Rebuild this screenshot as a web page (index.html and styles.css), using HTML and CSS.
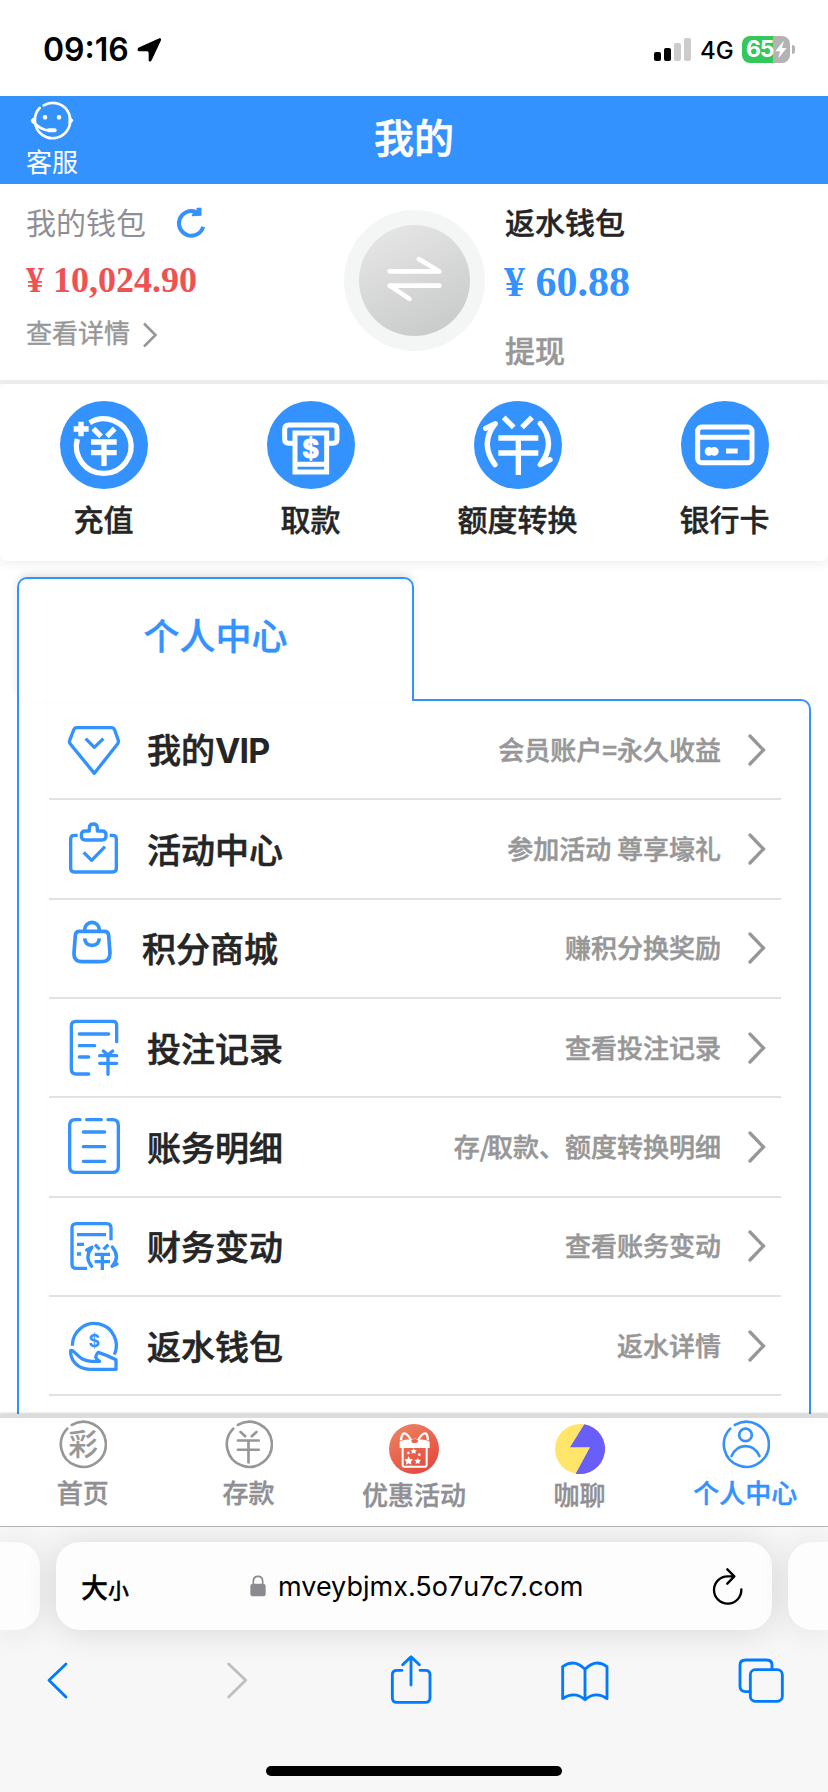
FILE: index.html
```html
<!DOCTYPE html>
<html lang="zh-CN">
<head>
<meta charset="utf-8">
<title>我的</title>
<link rel="stylesheet" href="styles.css">
</head>
<body>
<div class="screen">
  <div class="status">
    <span class="time">09:16</span>
    <svg class="loc" viewBox="408 111 78 78"><path d="M415 143L478 115q7-2 5 6L455 181q-4 7-9 1V159q0-5-5-5H418q-9-2-3-11Z"/></svg>
    <svg class="signal" viewBox="0 0 111 69"><rect y="42" width="21" height="27" rx="6"/><rect x="30" y="30" width="21" height="39" rx="6"/><rect x="60" y="15" width="21" height="54" rx="6" fill="#ccc"/><rect x="90" width="21" height="69" rx="6" fill="#ccc"/></svg>
    <span class="net">4G</span>
    <div class="battery"><span>65</span><svg viewBox="0 0 36 54"><path d="M25 1L1 31H15L10 52 35 21H21L26 2Z" fill="#fff"/></svg></div>
    <i class="battery-cap"></i>
  </div>

  <header class="header">
    <a class="service">
      <svg viewBox="88 303 138 120" fill="none" stroke="#fff" stroke-width="8" stroke-linecap="round"><path d="M132 316A53 53 0 1 1 106 366Q104 340 120 324M106 370Q125 391 150 391"/><path d="M106 352q-24 9 0 22ZM208 352q24 9 0 20Z" fill="#fff" stroke-width="2"/><path d="M148 391H165" stroke-width="12"/><path d="M136 352h0M178 352h0" stroke-width="14"/></svg>
      <span>客服</span>
    </a>
    <h1>我的</h1>
  </header>

  <section class="wallets">
    <div class="wallet mine">
      <div class="wallet-name">我的钱包
        <svg viewBox="525 82 92 96" fill="none" stroke="#3492ff" stroke-width="12"><path d="M588 97A37 37 0 1 0 609 141"/><path d="M590 84h14v24l-29 2q-2-9 12-13z" fill="#3492ff" stroke="none"/></svg>
      </div>
      <div class="money red">¥ 10,024.90</div>
      <div class="detail">查看详情 <svg viewBox="0 0 16 26" fill="none" stroke="#979797" stroke-width="2.6"><path d="M2 1.5L13.500 13 2 24.500"/></svg></div>
    </div>
    <div class="swap"><div><svg viewBox="165 222 178 144" fill="none" stroke="#fff" stroke-width="14" stroke-linecap="round" stroke-linejoin="round"><path d="M179 271H329L267 234M329 314H179L239 354"/></svg></div></div>
    <div class="wallet rebate">
      <div class="wallet-name">返水钱包</div>
      <div class="money blue">¥ 60.88</div>
      <div class="withdraw">提现</div>
    </div>
  </section>

  <nav class="actions">
    <a><svg viewBox="178 63 264 264" fill="none" stroke="#fff" stroke-width="16"><circle cx="310" cy="195" r="132" fill="#3492ff" stroke="none"/><path d="M267 128A82 82 0 1 1 230 177M219 147H264M241 125V169M278 146L301 169M342 146L319 169M271 186H348M271 218H348M310 181V258"/></svg><span>充值</span></a>
    <a><svg viewBox="799 63 264 264" fill="none" stroke="#fff" stroke-width="15"><circle cx="931" cy="195" r="132" fill="#3492ff" stroke="none"/><path d="M883 190H864Q852 190 852 178V148Q852 135 864 135H997Q1009 135 1009 148V178Q1009 190 997 190H977"/><path d="M883 159H978V276H883ZM876 253H985"/><text x="930" y="235" text-anchor="middle" font-family="Inter" font-size="77" font-weight="700" fill="#fff" stroke="#fff" stroke-width="3">$</text></svg><span>取款</span></a>
    <a><svg viewBox="178 63 264 264" fill="none" stroke="#fff" stroke-width="16"><circle cx="310" cy="195" r="132" fill="#3492ff" stroke="none"/><path d="M267 112L297 142M352 112L322 142M251 174H371M251 219H371M311 174V285"/><path d="M213 145L242 131Q194 190 241 254M377 131Q426 190 377 254L406 239" stroke-linecap="round" stroke-linejoin="round"/></svg><span>额度转换</span></a>
    <a><svg viewBox="799 63 264 264" fill="none" stroke="#fff" stroke-width="15"><circle cx="931" cy="195" r="132" fill="#3492ff" stroke="none"/><rect x="849" y="141" width="163" height="107" rx="12"/><path d="M849 172H1012M934 213H969"/><path d="M883 214h0M899 214h0" stroke-width="26" stroke-linecap="round"/></svg><span>银行卡</span></a>
  </nav>

  <main class="center">
    <div class="tab">个人中心</div>
    <ul class="list">
      <li><svg class="ico" viewBox="192 480 180 180"><path d="M230 503H334Q341 503 344 510L355 541Q356 547 353 551L283 640 211 552Q207 547 209 541L221 510Q224 503 230 503ZM257 536L283 562 310 536"/></svg><b>我的<span>VIP</span></b><em>会员账户=永久收益</em><svg class="go" viewBox="0 0 18 32"><path d="M2 2L15.500 16 2 30"/></svg></li>
      <li><svg class="ico" viewBox="192 778 180 180"><path d="M233 827H223Q212 827 212 838V926Q212 937 223 937H338Q349 937 349 926V838Q349 827 338 827H329M256 814H268V805Q268 793 280 793T292 805V814H306Q318 814 318 826V829Q318 841 306 841H256Q244 841 244 829V826Q244 814 256 814ZM251 878L275 902 315 861"/></svg><b>活动中心</b><em>参加活动 尊享壕礼</em><svg class="go" viewBox="0 0 18 32"><path d="M2 2L15.500 16 2 30"/></svg></li>
      <li class="shop"><svg class="ico" viewBox="192 1077 180 180"><path d="M254 1116V1112A22 22 0 0 1 298 1112V1116M238 1117H313Q325 1117 326 1129L330 1182Q330 1208 306 1208H246Q221 1208 222 1182L226 1129Q227 1117 238 1117ZM254 1138Q256 1159 276 1159T298 1138" stroke-width="11"/></svg><b>积分商城</b><em>赚积分换奖励</em><svg class="go" viewBox="0 0 18 32"><path d="M2 2L15.500 16 2 30"/></svg></li>
      <li><svg class="ico" viewBox="192 85 180 180"><path stroke-linecap="round" d="M350 156V107Q350 95 339 95H228Q214 95 214 109V239Q214 253 228 253H266M238 133H326M238 168H284M238 202H266M310 184L324 196 338 184M299 198H350M299 221H350M324 198V254"/></svg><b>投注记录</b><em>查看投注记录</em><svg class="go" viewBox="0 0 18 32"><path d="M2 2L15.500 16 2 30"/></svg></li>
      <li><svg class="ico" viewBox="192 384 180 180"><path stroke-linecap="round" d="M240 392H226Q209 392 209 409V533Q209 550 226 550H337Q355 550 355 533V409Q355 392 337 392H324M260 392H304M250 429H314M250 473H314M250 517H314"/></svg><b>账务明细</b><em>存<span class="slash">/</span>取款、额度转换明细</em><svg class="go" viewBox="0 0 18 32"><path d="M2 2L15.500 16 2 30"/></svg></li>
      <li><svg class="ico" viewBox="192 681 180 180"><path d="M333 754V718Q333 704 320 704H229Q216 704 216 717V825Q216 838 229 838H261M231 737H318M231 766H252M231 795H243M285 767L299 781M325 767L311 781M284 796H330M284 818H330M307 796V843"/><path stroke-linecap="round" d="M260 783L276 775Q252 804 275 832M337 774Q362 804 336 832L351 825"/></svg><b>财务变动</b><em>查看账务变动</em><svg class="go" viewBox="0 0 18 32"><path d="M2 2L15.500 16 2 30"/></svg></li>
      <li><svg class="ico" viewBox="192 979 180 180"><path d="M217 1068A66 66 0 1 1 343 1095M212 1083Q213 1081 219 1084C235 1096 242 1114 275 1115H299Q289 1109 287 1102 289 1093 295 1088 325 1098 348 1110V1139H270C232 1139 210 1110 212 1083Z"/><text x="283" y="1073" text-anchor="middle" font-family="Inter" font-size="53" font-weight="700" fill="#3492ff" stroke="none">$</text></svg><b>返水钱包</b><em>返水详情</em><svg class="go" viewBox="0 0 18 32"><path d="M2 2L15.500 16 2 30"/></svg></li>
    </ul>
  </main>

  <nav class="tabbar">
    <a><svg class="line" viewBox="172 88 148 148"><path d="M214 103A68 68 0 1 1 200 114"/><text x="248" y="194" text-anchor="middle" font-size="90" font-weight="500" fill="#979797" stroke="none">彩</text></svg><span>首页</span></a>
    <a><svg class="line" viewBox="670 88 148 148"><path d="M712 103A68 68 0 1 1 698 114M720 124L734 137M768 124L754 137M712 150H775M712 178H775M744 150V216"/></svg><span>存款</span></a>
    <a class="big"><svg viewBox="15 18 150 150"><defs><linearGradient id="gift" x2=".6" y2="1"><stop stop-color="#ed8763"/><stop offset="1" stop-color="#e54b40"/></linearGradient></defs><circle cx="90" cy="93" r="75" fill="url(#gift)"/><path d="M81 67Q68 42 58 47 52 51 51 67M102 67Q116 42 126 47 131 51 132 67" fill="none" stroke="#fff" stroke-width="7" stroke-linejoin="round"/><path d="M47 71Q68 62 80 66 92 57 103 66 116 62 137 71V90H47Z" fill="#fff"/><ellipse cx="92" cy="69" rx="10" ry="6" fill="#e8614e"/><path d="M56 89V141Q56 146 61 146H123Q128 146 128 141V89" fill="none" stroke="#fff" stroke-width="6"/><path d="M74 115l4 8 9 1-6 7 1 9-8-4-8 4 1-9-6-7 9-1zM101 119l3 6 7 1-5 5 1 7-6-3-6 3 1-7-5-5 7-1zM89 91l3 5 6 1-4 4 1 6-6-3-6 3 1-6-4-4 6-1z" fill="#fff"/><path d="M73 105h0M106 110h0" stroke="#fff" stroke-width="8" stroke-linecap="round"/></svg><span>优惠活动</span></a>
    <a class="big"><svg viewBox="0 0 150 150"><circle cx="75" cy="75" r="75" fill="#ffe66b"/><path d="M88 1A75 75 0 0 1 62 149L105 70H45Z" fill="#695ff8"/></svg><span>咖聊</span></a>
    <a class="on"><svg class="line" viewBox="918 88 148 148"><path d="M960 103A68 68 0 1 1 946 114"/><circle cx="992" cy="133" r="19"/><path d="M950 197Q963 167 992 167T1034 197"/></svg><span>个人中心</span></a>
  </nav>

  <footer class="browser">
    <div class="address-row">
      <i class="side left"></i>
      <div class="address">
        <span class="size">大<small>小</small></span>
        <svg class="lock" viewBox="0 0 48 66"><rect x="1" y="26" width="46" height="38" rx="8" fill="#8a8a8f"/><path d="M10 30V19Q10 4 24 4T38 19V30" fill="none" stroke="#8a8a8f" stroke-width="5"/></svg>
        <span class="url">mveybjmx.5o7u7c7.com</span>
        <svg class="reload" viewBox="893 525 96 114" fill="none" stroke="#000" stroke-width="7" stroke-linecap="round" stroke-linejoin="round"><path d="M959 553H940A41 41 0 1 0 981 592M939 532L960 553 939 575"/></svg>
      </div>
      <i class="side right"></i>
    </div>
    <div class="tools">
      <svg class="back" viewBox="135 790 75 150"><path d="M198 820L147 869 198 919"/></svg>
      <svg class="forward" viewBox="675 790 75 150"><path d="M686 820L737 869 686 919"/></svg>
      <svg class="share" viewBox="0 0 126 150"><path d="M36 49H21Q7 49 7 62V131Q7 145 21 145H106Q120 145 120 131V62Q120 49 106 49H90M63 93V10M38 32L63 8 88 32"/></svg>
      <svg class="book" viewBox="437 790 150 150"><path d="M512 836Q480 803 445 828V924Q480 900 512 927 544 900 578 924V828Q544 803 512 836V927"/></svg>
      <svg class="tabs" viewBox="967 790 144 150"><path d="M1006 903H993Q976 903 976 887V823Q976 808 993 808H1056Q1072 808 1072 823V837"/><rect x="1007" y="837" width="96" height="95" rx="15"/></svg>
    </div>
    <i class="home"></i>
  </footer>
</div>
</body>
</html>
```
FILE: styles.css
```css
* { box-sizing: border-box; }
body { margin: 0; background: #fff; font-family: "Noto Sans CJK SC", sans-serif; color: #252525; }
svg { display: block; flex: none; }
.screen { width: 828px; height: 1792px; overflow: hidden; display: flex; flex-direction: column; }

.status { height: 96px; flex: none; display: flex; padding: 36px 33px 0 43px; font-family: Inter, sans-serif; color: #000; }
.time { width: 93px; font-size: 32px; line-height: 28px; font-weight: 600; }
.loc { width: 26px; height: 26px; margin-top: 1px; }
.signal { width: 37px; height: 23px; margin: 2px 9px 0 auto; }
.net { width: 42px; font-size: 24px; line-height: 30px; font-weight: 500; }
.battery { width: 48px; height: 27px; border-radius: 8px; background: linear-gradient(90deg, #34c759 31px, #b3b3b3 31px); display: flex; padding-left: 4px; color: #fff; }
.battery span { width: 29px; font-size: 23px; line-height: 27px; font-weight: 700; letter-spacing: -1.2px; }
.battery svg { width: 12px; height: 18px; margin-top: 5px; }
.battery-cap { width: 3px; height: 9px; margin: 9px 0 0 2px; border-radius: 0 4px 4px 0; background: #b3b3b3; }

.header { height: 88px; flex: none; background: #3492ff; color: #fff; display: grid; grid-template-columns: 104px 1fr 104px; }
.service { display: flex; flex-direction: column; align-items: center; padding-top: 5px; font-size: 26px; line-height: 38px; }
.service svg { width: 46px; height: 40px; margin-bottom: 1px; }
.header h1 { margin: 0; text-align: center; font-size: 40px; line-height: 80px; font-weight: 500; -webkit-text-stroke: .6px; }

.wallets { height: 200px; flex: none; display: flex; border-bottom: 4px solid #eff0f0; }
.wallet { padding-top: 19px; }
.mine { width: 344px; padding-left: 26px; }
.wallet-name { display: flex; font-size: 30px; line-height: 36px; color: #8f8f94; }
.wallet-name svg { width: 31px; height: 32px; margin: 4px 0 0 29px; }
.money { font-family: "Liberation Serif", serif; font-weight: 700; }
.red { color: #ee5252; font-size: 36px; line-height: 40px; margin-top: 21px; }
.detail { display: flex; color: #979797; font-size: 26px; line-height: 36px; margin-top: 14px; -webkit-text-stroke: .4px; }
.detail svg { width: 16px; height: 26px; margin: 8px 0 0 12px; }
.swap { width: 141px; height: 141px; margin-top: 26px; border-radius: 50%; background: #f4f6f6; display: grid; place-items: center; }
.swap div { width: 111px; height: 111px; border-radius: 50%; background: linear-gradient(155deg, #e8e8e8, #c6c7c7); display: grid; place-items: center; }
.swap svg { width: 59px; height: 48px; margin-bottom: 3px; }
.rebate { padding-left: 20px; }
.rebate .wallet-name { color: #252525; font-weight: 500; -webkit-text-stroke: .4px; }
.blue { color: #3492ff; font-size: 42px; line-height: 46px; margin: 20px 0 0 -1px; }
.withdraw { color: #979797; font-size: 30px; line-height: 40px; margin-top: 24px; font-weight: 500; -webkit-text-stroke: .5px; }

.actions { height: 177px; flex: none; display: grid; grid-template-columns: repeat(4, 207px); border-radius: 8px; box-shadow: 0 2px 12px rgba(0,0,0,.08); }
.actions a { display: flex; flex-direction: column; align-items: center; padding-top: 17px; font-size: 30px; line-height: 40px; font-weight: 500; }
.actions span { -webkit-text-stroke: .4px; }
.actions svg { width: 88px; height: 88px; margin-bottom: 9px; }

.center { height: 853px; flex: none; padding: 16px 17px 0; overflow: hidden; }
.tab { position: relative; z-index: 1; width: 397px; height: 124px; margin-bottom: -2px; border: 2px solid #3492ff; border-bottom: 0; border-radius: 10px 10px 0 0; background: #fff; text-align: center; font-size: 36px; line-height: 111px; font-weight: 500; color: #3492ff; -webkit-text-stroke: .4px; box-shadow: 0 -4px 10px -2px rgba(0,0,0,.14); }
.list { list-style: none; margin: 0; padding: 0 28px 0 30px; height: 740px; border: 2px solid #3492ff; border-radius: 0 10px 0 0; }
.list li { height: 99.35px; border-bottom: 2px solid #e2e2e2; display: flex; align-items: center; padding: 0 15px; }
.ico { width: 60px; height: 60px; margin-right: 23px; fill: none; stroke: #3492ff; stroke-width: 10; stroke-linejoin: round; }
.list b { font-size: 34px; line-height: 50px; font-weight: 500; -webkit-text-stroke: .6px; }
.list b span { font-family: Inter, sans-serif; font-weight: 700; letter-spacing: -.8px; -webkit-text-stroke: 0; }
.shop .ico { margin-right: 18px; }
.list em { margin: 0 0 2px auto; font-style: normal; font-size: 26px; line-height: 40px; color: #979797; font-weight: 500; -webkit-text-stroke: .5px; }
.slash { letter-spacing: -3px; }
.go { width: 18px; height: 32px; margin-left: 27px; fill: none; stroke: #979797; stroke-width: 3.3; stroke-linecap: round; }

.tabbar { position: relative; height: 112px; flex: none; background: #fff; border-top: 4px solid #dcdcdc; display: grid; grid-template-columns: repeat(5, 1fr); box-shadow: 0 -1px 2px rgba(0,0,0,.18); }
.tabbar a { display: flex; flex-direction: column; align-items: center; padding-top: 2px; color: #8f8f94; font-size: 26px; line-height: 36px; font-weight: 500; }
.tabbar span { -webkit-text-stroke: .4px; }
.line { width: 49px; height: 49px; margin-bottom: 5px; fill: none; stroke: #979797; stroke-width: 8; stroke-linecap: round; }
.tabbar .big { padding-top: 6px; }
.big svg { width: 50px; height: 50px; margin-bottom: 2px; }
.tabbar .on { color: #3492ff; }
.on .line { stroke: #3492ff; }

.browser { height: 266px; flex: none; border-top: 1px solid #b9b9bb; background: #f7f7f7; display: flex; flex-direction: column; align-items: center; }
.address-row { width: 828px; padding-top: 15px; height: 104px; flex: none; display: flex; justify-content: space-between; }
.address { width: 716px; height: 88px; border-radius: 24px; background: #fdfdfd; box-shadow: 0 2px 32px rgba(0,0,0,.13); display: flex; align-items: center; padding: 0 28px 0 25px; font-family: Inter, "Noto Sans CJK SC", sans-serif; color: #000; }
.side { width: 40px; height: 88px; background: #fdfdfd; box-shadow: 0 2px 32px rgba(0,0,0,.09); }
.left { border-radius: 0 24px 24px 0; }
.right { border-radius: 24px 0 0 24px; }
.size { width: 169px; font-size: 27px; font-weight: 500; -webkit-text-stroke: .3px; }
.size small { font-size: 21px; }
.lock { width: 16px; height: 22px; margin-right: 12px; }
.url { font-size: 27px; white-space: nowrap; }
.reload { width: 32px; height: 38px; margin-left: auto; }
.tools { width: 828px; padding: 23px 43px 0 45px; display: flex; }
.tools svg { height: 50px; fill: none; stroke: #007aff; stroke-width: 8.500; stroke-linecap: round; stroke-linejoin: round; }
.back { width: 25px; margin-right: 155px; }
.tools .forward { width: 25px; margin-right: 140px; stroke: #bfbfbf; }
.share { width: 42px; }
.book { width: 50px; margin-left: 128px; }
.tabs { width: 48px; margin-left: auto; }
.home { width: 296px; height: 10px; border-radius: 5px; background: #000; margin: auto 0 16px; }
```
